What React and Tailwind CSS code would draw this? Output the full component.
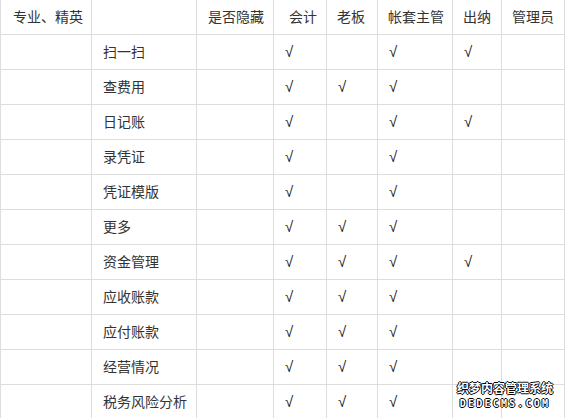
const roles = ['会计', '老板', '帐套主管', '出纳', '管理员']

const rows = [
  ['扫一扫', [1, 0, 1, 1, 0]],
  ['查费用', [1, 1, 1, 0, 0]],
  ['日记账', [1, 0, 1, 1, 0]],
  ['录凭证', [1, 0, 1, 0, 0]],
  ['凭证模版', [1, 0, 1, 0, 0]],
  ['更多', [1, 1, 1, 0, 0]],
  ['资金管理', [1, 1, 1, 1, 0]],
  ['应收账款', [1, 1, 1, 0, 0]],
  ['应付账款', [1, 1, 1, 0, 0]],
  ['经营情况', [1, 1, 1, 0, 0]],
  ['税务风险分析', [1, 1, 1, 0, 0]],
]

const outline = '1px 0 #000, -1px 0 #000, 0 1px #000, 0 -1px #000'

export default function App() {
  return (
    <div
      className="relative h-[418px] w-[567px] overflow-hidden bg-white text-[14px] text-[#333]"
      style={{ fontFamily: '"Liberation Sans", "Noto Sans CJK SC", sans-serif' }}
    >
      <table className="-mt-px w-[565px] table-fixed border-collapse">
        <colgroup>
          <col className="w-[91px]" />
          <col className="w-[105px]" />
          <col className="w-[77px]" />
          <col className="w-[53px]" />
          <col className="w-[51px]" />
          <col className="w-[75px]" />
          <col className="w-[49px]" />
          <col className="w-[63px]" />
        </colgroup>
        <thead>
          <tr className="h-[35px]">
            <th className="border border-[#ddd] pl-[12px] text-left font-normal">专业、精英</th>
            <th className="border border-[#ddd]"></th>
            <th className="border border-[#ddd] pl-[11px] text-left font-normal">是否隐藏</th>
            {roles.map((r, i) => (
              <th
                key={r}
                className={`border border-[#ddd] text-left font-normal ${i === 0 ? 'pl-[15px]' : 'pl-[10px]'}`}
              >
                {r}
              </th>
            ))}
          </tr>
        </thead>
        <tbody>
          {rows.map(([name, marks]) => (
            <tr key={name} className="h-[35px]">
              <td className="border border-[#ddd]"></td>
              <td className="border border-[#ddd] pl-[11px]">{name}</td>
              <td className="border border-[#ddd]"></td>
              {marks.map((m, i) => (
                <td key={i} className="border border-[#ddd] pl-[11px] text-[15px] text-[#222]">
                  {m ? '√' : ''}
                </td>
              ))}
            </tr>
          ))}
        </tbody>
      </table>

      {/* watermark */}
      <div className="absolute left-[457px] top-[383px] flex flex-col items-center leading-none text-white">
        <span className="text-[12px] font-bold" style={{ textShadow: outline }}>
          织梦内容管理系统
        </span>
        <span
          className="mt-[4px] text-[10px] font-bold tracking-[2.2px]"
          style={{ fontFamily: '"DejaVu Sans Mono", monospace', textShadow: outline }}
        >
          DEDECMS.COM
        </span>
      </div>
    </div>
  )
}
